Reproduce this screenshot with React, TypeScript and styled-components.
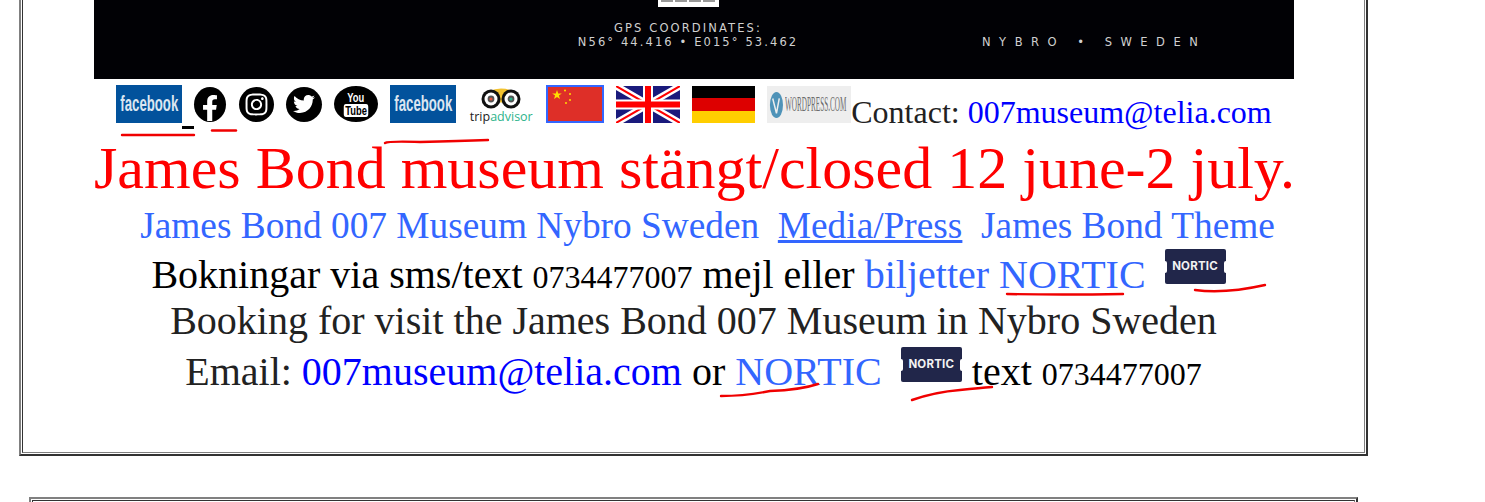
import React from 'react';
import styled, { createGlobalStyle } from 'styled-components';
import { FaFacebookF, FaInstagram, FaTwitter } from 'react-icons/fa';

const Global = createGlobalStyle`
  html, body { margin: 0; padding: 0; background: #fff; overflow: hidden; }
  body { font-family: "Liberation Serif", "Times New Roman", serif; color: #000; }
`;

const Page = styled.div`
  position: relative;
  width: 1485px;
  height: 502px;
  overflow: hidden;
`;

const Frame = styled.div`
  margin: -21px 117px 0 19px;
  border: 2px solid;
  border-color: #808080 #333 #333 #808080;
  padding: 1px;
  height: 477px;
  box-sizing: border-box;
`;

const FrameInner = styled.div`
  height: 100%;
  box-sizing: border-box;
  border: 1px solid;
  border-color: #333 #808080 #808080 #333;
  padding: 17px 0 0 71px;
`;

const Banner = styled.div`
  width: 1200px;
  height: 79px;
  background: #010105;
  display: flex;
  color: #d0d0d0;
  font-family: "DejaVu Sans", sans-serif;
  overflow: hidden;
`;

const GpsBlock = styled.div`
  margin-left: 485px;
  width: 218px;
  display: flex;
  flex-direction: column;
  align-items: center;
  flex: none;
`;

const LogoStub = styled.div`
  width: 61px;
  height: 7px;
  box-sizing: border-box;
  border: solid #fff;
  border-width: 0 3px;
  background: repeating-linear-gradient(90deg, #999 0 12px, #fff 12px 14px) top / 100% 2px no-repeat #fff;
  margin-bottom: 14px;
`;

const GpsLine = styled.div`
  font-size: 11.5px;
  line-height: 14px;
  letter-spacing: 2.1px;
  white-space: nowrap;
`;

const Place = styled.div`
  margin: 35px 0 0 185px;
  font-size: 11.5px;
  line-height: 14px;
  letter-spacing: 8.5px;
  white-space: nowrap;
`;

const Content = styled.div`
  width: 1199px;
  text-align: center;
  white-space: nowrap;
`;

const SocialRow = styled.div`
  display: flex;
  justify-content: center;
  align-items: flex-start;
  width: 1200px;
  height: 59px;
  padding-top: 6px;
  box-sizing: border-box;
  font-size: 32px;
  line-height: 44px;
`;

const Item = styled.div<{ $w: number; $gap?: number }>`
  width: ${p => p.$w}px;
  margin-left: ${p => p.$gap ?? 12}px;
  height: 38px;
  flex: none;
  display: flex;
  align-items: center;
  justify-content: center;
`;

const Gap = styled.div`
  width: 12px;
  height: 3px;
  margin-top: 41px;
  background: #000;
  flex: none;
`;

const FacebookBadge = styled.div`
  width: 66px;
  height: 38px;
  background: #02529c;
  color: #dbe6f1;
  display: flex;
  align-items: center;
  justify-content: center;
  overflow: hidden;
  font: 700 22px "Liberation Sans", sans-serif;
  span { display: block; transform: scaleX(0.6); }
`;

const Disc = styled.div<{ $w: number; $h: number }>`
  width: ${p => p.$w}px;
  height: ${p => p.$h}px;
  border-radius: 50%;
  background: #000;
  color: #fff;
  display: flex;
  flex-direction: column;
  align-items: center;
  justify-content: center;
  overflow: hidden;
`;

const FIcon = styled(FaFacebookF)`
  margin-top: 8px;
`;

const TubeText = styled.div`
  font: 700 13px/13px "Liberation Sans", sans-serif;
  transform: scaleX(0.72);
`;

const TubeBox = styled(TubeText)`
  background: #fff;
  color: #000;
  border-radius: 3px;
  padding: 0 2px;
`;

const Trip = styled.div`
  display: flex;
  flex-direction: column;
  align-items: center;
  padding-top: 3px;
`;

const TripLabel = styled.div`
  font: 400 12.5px/12px "Open Sans", sans-serif;
  color: #222;
  margin-top: 2px;
  b { font-weight: 400; color: #2db38b; }
`;

const ChinaFlag = styled.svg`
  display: block;
  border: 2px solid #3366ff;
  box-sizing: border-box;
`;

const Press = styled.div`
  width: 84px;
  height: 37px;
  margin-top: 1px;
  padding-left: 2px;
  box-sizing: border-box;
  background: #eeeeee;
  display: flex;
  align-items: center;
  gap: 2px;
  color: #6d6d6d;
  font: 400 20px "Liberation Serif", serif;
  overflow: hidden;
  span { display: block; transform: scaleX(0.36); transform-origin: left center; white-space: nowrap; }
`;

const PressLogo = styled.svg`
  flex: none;
`;

const ContactText = styled.div`
  margin-top: 5px;
  flex: none;
  color: #222;
`;

const Mail = styled.span`
  color: #0000ff;
`;

const Line = styled.div<{ $size: number; $height: number; $color?: string }>`
  font-size: ${p => p.$size}px;
  line-height: ${p => p.$height}px;
  height: ${p => p.$height}px;
  color: ${p => p.$color ?? '#000'};
`;

const Blue = styled.span<{ $u?: boolean }>`
  color: #3366ff;
  text-decoration: ${p => (p.$u ? 'underline' : 'none')};
`;

const Small = styled.span`
  font-size: 32px;
`;

const Dark = styled.span`
  color: #222;
`;

// negative block margins keep the raised badge from growing the line box
const Nortic = styled.span<{ $lift: number }>`
  position: relative;
  display: inline-flex;
  align-items: center;
  justify-content: center;
  width: 61px;
  height: 35px;
  margin: -20px 0 -20px 19px;
  vertical-align: ${p => p.$lift}px;
  background: #21264a;
  border-radius: 2px;
  color: #f2f2f2;
  font: 700 11.5px "Inter", sans-serif;
  letter-spacing: 0.2px;
  &::before, &::after {
    content: '';
    position: absolute;
    top: 12px;
    width: 2px;
    height: 12px;
    background: #fff;
  }
  &::before { left: 0; border-radius: 0 2px 2px 0; }
  &::after { right: 0; border-radius: 2px 0 0 2px; }
`;

const Bottom = styled.div`
  margin: 41px 127px 0 29px;
  border: 2px solid;
  border-color: #808080 #333 #333 #808080;
  padding: 1px;
  height: 60px;
  box-sizing: border-box;
`;

const BottomInner = styled.div`
  height: 100%;
  border: 1px solid;
  border-color: #333 #808080 #808080 #333;
`;

const Ink = styled.svg`
  position: absolute;
  inset: 0;
  pointer-events: none;
  fill: none;
  stroke: #f00000;
  stroke-width: 2.4;
  stroke-linecap: round;
`;

const strokes = [
  'M122 135 L194 135',
  'M212 130.5 L236 130.5',
  'M385 143 Q388 141 420 142 Q460 141 488 140',
  'M1007 294 Q1060 295 1123 294',
  'M1195 290 Q1225 294 1265 285',
  'M721 396 Q745 396 770 391 Q800 390 818 384',
  'M912 400 Q935 392 960 390 Q980 388 992 387',
];

const App = () => (
  <Page>
    <Global />
    <Frame>
      <FrameInner>
        <Banner>
          <GpsBlock>
            <LogoStub />
            <GpsLine>GPS COORDINATES:</GpsLine>
            <GpsLine>N56° 44.416 • E015° 53.462</GpsLine>
          </GpsBlock>
          <Place>NYBRO • SWEDEN</Place>
        </Banner>
        <Content>
          <SocialRow>
            <Item $w={66} $gap={0}>
              <FacebookBadge><span>facebook</span></FacebookBadge>
            </Item>
            <Gap />
            <Item $w={32} $gap={0}>
              <Disc $w={32} $h={35}><FIcon size={26} /></Disc>
            </Item>
            <Item $w={35} $gap={13}>
              <Disc $w={35} $h={35}><FaInstagram size={25} /></Disc>
            </Item>
            <Item $w={36}>
              <Disc $w={36} $h={35}><FaTwitter size={22} /></Disc>
            </Item>
            <Item $w={44}>
              <Disc $w={44} $h={36}>
                <TubeText>You</TubeText>
                <TubeBox>Tube</TubeBox>
              </Disc>
            </Item>
            <Item $w={66}>
              <FacebookBadge><span>facebook</span></FacebookBadge>
            </Item>
            <Item $w={66}>
              <Trip>
                <svg width="42" height="21" viewBox="0 0 42 21">
                  <path d="M9 3 Q21 -2 33 3 L21 15 Z" fill="#f2c230" />
                  <circle cx="11" cy="11" r="9.5" fill="#111" />
                  <circle cx="31" cy="11" r="9.5" fill="#111" />
                  <circle cx="11" cy="11" r="6.5" fill="#fff" />
                  <circle cx="31" cy="11" r="6.5" fill="#fff" />
                  <circle cx="11" cy="11" r="3.4" fill="#555" />
                  <circle cx="31" cy="11" r="3.4" fill="#555" />
                  <circle cx="11" cy="11" r="1.6" fill="#e2543c" />
                  <circle cx="31" cy="11" r="1.6" fill="#2db38b" />
                </svg>
                <TripLabel>trip<b>advisor</b></TripLabel>
              </Trip>
            </Item>
            <Item $w={58}>
              <ChinaFlag width="58" height="38" viewBox="0 0 54 34">
                <rect width="54" height="34" fill="#de2f28" />
                <polygon points="9,3 10.2,6.4 13.8,6.4 10.9,8.6 12,12 9,10 6,12 7.1,8.6 4.2,6.4 7.8,6.4" fill="#ffde00" />
                <circle cx="17" cy="3.5" r="1" fill="#ffde00" />
                <circle cx="22" cy="7" r="1" fill="#ffde00" />
                <circle cx="22" cy="13" r="1" fill="#ffde00" />
                <circle cx="18" cy="16" r="1" fill="#ffde00" />
              </ChinaFlag>
            </Item>
            <Item $w={64}>
              <svg width="64" height="37" viewBox="0 0 64 37">
                <rect width="64" height="37" fill="#1a1a7c" />
                <path d="M0 0 L64 37 M64 0 L0 37" stroke="#fff" strokeWidth="7" />
                <path d="M0 0 L64 37 M64 0 L0 37" stroke="#f00" strokeWidth="2" />
                <path d="M32 0 V37 M0 18.5 H64" stroke="#fff" strokeWidth="10" />
                <path d="M32 0 V37 M0 18.5 H64" stroke="#f00" strokeWidth="6" />
              </svg>
            </Item>
            <Item $w={63}>
              <svg width="63" height="37" viewBox="0 0 63 37">
                <rect width="63" height="12" fill="#000" />
                <rect y="12" width="63" height="13" fill="#dd0000" />
                <rect y="25" width="63" height="12" fill="#ffce00" />
              </svg>
            </Item>
            <Item $w={84}>
              <Press>
                <PressLogo width="14" height="30" viewBox="0 0 15 30">
                  <ellipse cx="8" cy="15" rx="7" ry="14" fill="#4f93b8" />
                  <path d="M4 8 L8 24 L11 8" stroke="#eee" strokeWidth="1.6" fill="none" />
                </PressLogo>
                <span>WORDPRESS.COM</span>
              </Press>
            </Item>
            <ContactText>Contact: <Mail>007museum@telia.com</Mail></ContactText>
          </SocialRow>
          <Line $size={60} $height={60} $color="#ff0000">James Bond museum stängt/closed 12 june-2 july.</Line>
          <Line $size={37.33} $height={55}>
            {'\u00a0\u00a0\u00a0'}
            <Blue>James Bond 007 Museum Nybro Sweden</Blue>{'\u00a0 '}
            <Blue $u>Media/Press</Blue>{'\u00a0 '}
            <Blue>James Bond Theme</Blue>
          </Line>
          <Line $size={40} $height={43}>
            Bokningar via sms/text <Small>0734477007</Small> mejl eller <Blue>biljetter</Blue> <Blue>NORTIC</Blue>
            <Nortic $lift={18}>NORTIC</Nortic>{'\u00a0'}
          </Line>
          <Line $size={40} $height={49} $color="#222">Booking for visit the James Bond 007 Museum in Nybro Sweden</Line>
          <Line $size={40} $height={53}>
            <Dark>Email: </Dark><Mail>007museum@telia.com</Mail> or <Blue>NORTIC</Blue>
            <Nortic $lift={17}>NORTIC</Nortic> text <Small>0734477007</Small>
          </Line>
        </Content>
      </FrameInner>
    </Frame>
    <Bottom><BottomInner /></Bottom>
    <Ink width="1485" height="502">
      {strokes.map(d => <path key={d} d={d} />)}
    </Ink>
  </Page>
);

export default App;
